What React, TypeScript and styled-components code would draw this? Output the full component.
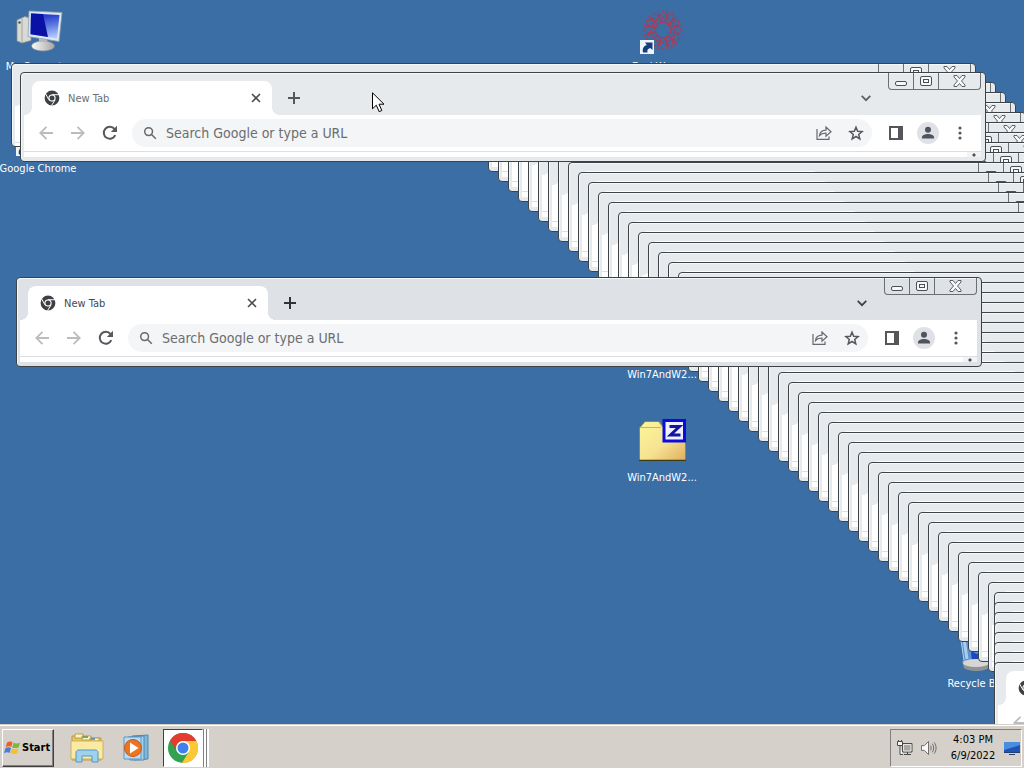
import React from "react";
import styled, { createGlobalStyle } from "styled-components";

const Global = createGlobalStyle`
  * { box-sizing: border-box; }
  body { margin: 0; background: #3a6ea5; font-family: "DejaVu Sans Condensed", "DejaVu Sans", sans-serif; }
  button { font: inherit; color: inherit; padding: 0; border: 0; background: none; }
`;

const Screen = styled.div`
  height: 100vh;
  display: flex;
  flex-direction: column;
  overflow: hidden;
`;

const Desktop = styled.main`
  position: relative;
  flex: 1;
  min-height: 0;
  overflow: hidden;
`;

const Shortcut = styled.a<{ $x: number; $y: number }>`
  position: absolute;
  left: ${(p) => p.$x}px;
  top: ${(p) => p.$y}px;
  width: 76px;
  display: flex;
  flex-direction: column;
  align-items: center;
  gap: 5px;
  color: #fff;
  font-size: 11px;
  line-height: 14px;
  white-space: nowrap;
  text-decoration: none;
`;

const Frame = styled.section<{ $x: number; $y: number; $w: number; $h: number; $active: boolean }>`
  position: absolute;
  left: ${(p) => p.$x}px;
  top: ${(p) => p.$y}px;
  width: ${(p) => p.$w}px;
  height: ${(p) => p.$h}px;
  display: flex;
  flex-direction: column;
  border: 1px solid #3c4246;
  border-radius: 4px;
  overflow: hidden;
  background: ${(p) => (p.$active ? "#dee1e6" : "#e7eaed")};
  box-shadow: inset 1px 1px 0 #f4f8fa;
  padding: 0 4px 4px 3px;
`;

const TabStrip = styled.header`
  display: flex;
  align-items: flex-start;
  height: 42px;
  flex: none;
  padding-left: 8px;
`;

const Tab = styled.div<{ $active: boolean }>`
  position: relative;
  display: flex;
  align-items: center;
  width: 240px;
  height: 34px;
  margin-top: 8px;
  padding: 0 8px 0 12px;
  gap: 8px;
  border-radius: 8px 8px 0 0;
  background: #fff;
  color: ${(p) => (p.$active ? "#45494d" : "#6b6f73")};
  font-size: 11px;
  flex: none;

  &::before,
  &::after {
    content: "";
    position: absolute;
    bottom: 0;
    width: 8px;
    height: 8px;
  }
  &::before {
    right: 100%;
    background: radial-gradient(circle at 0 0, transparent 8px, #fff 8px);
  }
  &::after {
    left: 100%;
    background: radial-gradient(circle at 100% 0, transparent 8px, #fff 8px);
  }
`;

const TabTitle = styled.span`
  flex: 1;
  white-space: nowrap;
`;

const IconButton = styled.button<{ $w?: number; $h?: number }>`
  display: flex;
  align-items: center;
  justify-content: center;
  flex: none;
  width: ${(p) => p.$w ?? 32}px;
  height: ${(p) => p.$h ?? 28}px;
`;

const NewTab = styled(IconButton)`
  margin: 11px 0 0 6px;
`;

const Spacer = styled.div`
  flex: 1;
`;

const Chevron = styled(IconButton)`
  margin: 11px 6px 0 0;
`;

const Caption = styled.div`
  display: flex;
  height: 17px;
  flex: none;
  border: 1px solid #6a6f73;
  border-top: 0;
  border-radius: 0 0 4px 4px;
  color: #4b5054;
`;

const CaptionButton = styled.button<{ $w: number }>`
  width: ${(p) => p.$w}px;
  height: 16px;
  display: flex;
  align-items: center;
  justify-content: center;

  & + & {
    border-left: 1px solid #6a6f73;
  }
`;

const Toolbar = styled.div`
  display: flex;
  align-items: center;
  height: 37px;
  flex: none;
  background: #fff;
  border-bottom: 1px solid #dcdfe2;
  padding: 0 5px 0 6px;
  color: #5f6368;
`;

const Omnibox = styled.label`
  display: flex;
  align-items: center;
  flex: 1;
  min-width: 0;
  height: 28px;
  margin-left: 6px;
  padding: 0 0 0 11px;
  border-radius: 14px;
  background: #f3f5f6;
`;

const Address = styled.input`
  flex: 1;
  min-width: 0;
  margin-left: 9px;
  padding: 0;
  border: 0;
  outline: 0;
  background: none;
  font: inherit;
  font-size: 14px;
  color: #5f6368;

  &::placeholder {
    color: #6a6e72;
    opacity: 1;
  }
`;

const Actions = styled.div`
  display: flex;
  margin-left: 8px;
`;

const Page = styled.div`
  flex: 1;
  background: #fff;
  display: flex;
  justify-content: flex-end;
`;

const Grip = styled.div`
  width: 14px;
  background: #f1f3f4;
  display: flex;
  align-items: center;
  justify-content: center;
`;

const ChromeMono = () => (
  <svg width="16" height="16" viewBox="0 0 16 16">
    <circle cx="8" cy="8" r="5.3" fill="none" stroke="#3d4145" strokeWidth="4.2" />
    <path d="M8 4.7H15M4.9 9.8L1.6 3.8M11.1 9.8L7.5 15.6" stroke="#fff" strokeWidth="1" />
    <circle cx="8" cy="8" r="3.6" fill="#fff" />
    <circle cx="8" cy="8" r="2.5" fill="#3d4145" />
  </svg>
);

type WinProps = { x: number; y: number; w: number; h?: number; active?: boolean; bare?: boolean };

/* A bare window lies under others, so only its frame, tab shape and buttons show. */
const BrowserWindow = ({ x, y, w, h = 90, active = false, bare = false }: WinProps) => (
  <Frame $x={x} $y={y} $w={w} $h={h} $active={active} aria-hidden={bare || undefined}>
    <TabStrip>
      <Tab $active={active}>
        <ChromeMono />
        {!bare && <TabTitle>New Tab</TabTitle>}
        {!bare && (
          <IconButton $w={16} $h={16} aria-label="Close tab">
            <svg width="10" height="10" viewBox="0 0 10 10" stroke="#4b4f53" strokeWidth="1.6"><path d="M1 1l8 8M9 1L1 9" /></svg>
          </IconButton>
        )}
      </Tab>
      {!bare && (
        <NewTab aria-label="New tab">
          <svg width="12" height="12" viewBox="0 0 12 12" stroke={active ? "#303438" : "#55595d"} strokeWidth="2"><path d="M6 0v12M0 6h12" /></svg>
        </NewTab>
      )}
      <Spacer />
      {!bare && (
        <Chevron aria-label="Search tabs">
          <svg width="10" height="7" viewBox="0 0 10 7" fill="none" stroke={active ? "#3c4044" : "#5b5f63"} strokeWidth="1.7"><path d="M.7.9L5 5.2 9.3.9" /></svg>
        </Chevron>
      )}
      <Caption>
        <CaptionButton $w={24} aria-label="Minimize">
          <svg width="12" height="16" viewBox="0 0 12 16" fill="#f6f8f9" stroke="currentColor"><rect x=".5" y="8.5" width="11" height="4" rx="1.5" /></svg>
        </CaptionButton>
        <CaptionButton $w={25} aria-label="Maximize">
          <svg width="12" height="10" viewBox="0 0 12 10" fill="#f6f8f9" stroke="currentColor"><rect x=".5" y=".5" width="11" height="9" rx="1.5" /><rect x="3.5" y="3.5" width="5" height="3" /></svg>
        </CaptionButton>
        <CaptionButton $w={42} aria-label="Close">
          <svg width="13" height="12" viewBox="0 0 13 12"><path d="M1 .5h3l2.500 3 2.500-3h3v1.500L8.500 6l3.500 4v1.500H9l-2.500-3-2.500 3H1V10l3.500-4L1 2z" fill="#f6f8f9" stroke="currentColor" strokeWidth=".9" /></svg>
        </CaptionButton>
      </Caption>
    </TabStrip>
    <Toolbar>
      <IconButton aria-label="Back"><svg width="14" height="14" viewBox="0 0 14 14" fill="none" stroke="#babcbe" strokeWidth="1.8"><path d="M14 7H1.500M7.500.8L1.300 7l6.200 6.200" /></svg></IconButton>
      {!bare && (
        <>
          <IconButton aria-label="Forward"><svg width="14" height="14" viewBox="0 0 14 14" fill="none" stroke="#babcbe" strokeWidth="1.8"><path d="M0 7h12.500M6.500.8L12.700 7l-6.200 6.200" /></svg></IconButton>
          <IconButton aria-label="Reload"><svg width="16" height="16" viewBox="0 0 16 16"><path d="M13.300 10.200A6 6 0 1 1 12.500 4" fill="none" stroke="#55595d" strokeWidth="2" /><path d="M15 .8V7H8.800z" fill="#55595d" /></svg></IconButton>
          <Omnibox>
            <svg width="14" height="14" viewBox="0 0 14 14" fill="none" stroke="#66696d" strokeWidth="1.5"><circle cx="5.600" cy="5.600" r="3.900" /><path d="M8.500 8.500l4.300 4.300" /></svg>
            <Address aria-label="Address" placeholder="Search Google or type a URL" />
            <IconButton aria-label="Share"><svg width="16" height="14" viewBox="0 0 16 14" fill="none" stroke="#66696d" strokeWidth="1.2"><path d="M1 3v10.300h12V10.500M3.500 9.500C4 6 6.500 4.300 10 4.200V1l5 4.700-5 4.500V7.200C7 7 5 7.800 3.500 9.500z" /></svg></IconButton>
            <IconButton aria-label="Bookmark"><svg width="16" height="16" viewBox="0 0 16 16" fill="none" stroke="#55595d" strokeWidth="1.5"><path d="M8 2.200l1.700 4.100 4.400.3-3.400 2.900 1.100 4.300L8 11.500l-3.800 2.300 1.100-4.300-3.400-2.900 4.400-.3z" /></svg></IconButton>
          </Omnibox>
          <Actions>
            <IconButton aria-label="Side panel"><svg width="14" height="14" viewBox="0 0 14 14"><path fill="#55555a" fillRule="evenodd" d="M0 0h14v14H0zM2 2v10h7V2z" /></svg></IconButton>
            <IconButton aria-label="Profile"><svg width="22" height="22" viewBox="0 0 22 22"><circle cx="11" cy="11" r="11" fill="#dfe1e6" /><circle cx="11" cy="7.700" r="3" fill="#4f535b" /><path d="M5 16.500v-1.200c0-2 3-3.300 6-3.300s6 1.300 6 3.300v1.200z" fill="#4f535b" /></svg></IconButton>
            <IconButton aria-label="Menu"><svg width="4" height="14" viewBox="0 0 4 14" fill="#55595d"><circle cx="2" cy="2" r="1.600" /><circle cx="2" cy="7" r="1.600" /><circle cx="2" cy="12" r="1.600" /></svg></IconButton>
          </Actions>
        </>
      )}
    </Toolbar>
    <Page>
      <Grip><svg width="4" height="4" viewBox="0 0 4 4"><path d="M0 2l2-2 2 2-2 2z" fill="#555" /></svg></Grip>
    </Page>
  </Frame>
);

const ComputerIcon = () => (
  <svg width="48" height="48" viewBox="1 1 48 48">
    <defs>
      <linearGradient id="screenGlow" x1=".4" x2=".6" y1="0" y2="1"><stop offset="0" stopColor="#1c2cc8" /><stop offset=".5" stopColor="#5a78e0" /><stop offset="1" stopColor="#b4ccff" /></linearGradient>
      <linearGradient id="stand" x1="0" x2="1"><stop offset="0" stopColor="#fafafa" /><stop offset="1" stopColor="#a9a5a5" /></linearGradient>
    </defs>
    <path d="M3 14l8-3.500 6 2v22l-9 2.500-5-2z" fill="#d9dad4" stroke="#8d918c" strokeWidth=".8" />
    <path d="M8 13v23" stroke="#a2a49e" />
    <circle cx="5.500" cy="16.500" r="1.200" fill="#3b5c38" />
    <path d="M25 32h8l1 7h-9z" fill="#c3c1c0" />
    <ellipse cx="29" cy="40" rx="11.500" ry="5" fill="url(#stand)" stroke="#8f8f94" strokeWidth=".6" />
    <path d="M15 5l33 1.500-3 29L14 30.500z" fill="#dfe7ee" stroke="#8ba0b5" strokeWidth=".8" />
    <path d="M17 7.500l28.500 1.500-2.500 23.500-26.500-4.300z" fill="url(#screenGlow)" />
    <path d="M17 7.500l12 .6 5 23-17.500-2.900z" fill="#0a12a6" />
  </svg>
);

const FolderIcon = () => (
  <svg width="48" height="48" viewBox="-1 -1 48 48">
    <defs><linearGradient id="folder" x1="0" x2="1" y1="0" y2="1"><stop offset="0" stopColor="#fdf79a" /><stop offset=".55" stopColor="#f5e291" /><stop offset="1" stopColor="#dfae5c" /></linearGradient></defs>
    <path d="M.5 9L6 2.500h14l4 5.500h22.500v34H.5z" fill="url(#folder)" stroke="#8f8a3c" />
    <path d="M2 8.500h20M20 3.500l3.500 4.500" fill="none" stroke="#c2b860" />
    <path d="M0 41.500h47" stroke="#3d3b16" strokeWidth="1.500" />
    <rect x="25" y="1.500" width="20.500" height="20.500" fill="#eef0ff" stroke="#0b0bdc" strokeWidth="3" />
    <path d="M30.500 7.500h10L31.500 16H41.500" fill="none" stroke="#1414a0" strokeWidth="3" />
  </svg>
);

const ArrowOverlay = () => (
  <>
    <rect x="2" y="33" width="14" height="14" fill="#eef4f8" />
    <path d="M5 45.500c-.8-4 .6-6.500 3.800-7.500L7 35.500h7.500V43l-2.300-2c-2.400.8-3.200 2-2.700 4.500z" fill="#123f7c" />
  </>
);

const RedIcon = () => (
  <svg width="48" height="48" viewBox="0 0 48 48" fill="none">
    {Array.from({ length: 12 }, (_, i) => (
      <path key={i} transform={`rotate(${i * 30} 25 23)`} d="M25 16l-4-5 4-8 4 8zM22 13l-3-9M28 13l3-9M23 16l2-7 2 7" stroke="#b5364e" strokeWidth="1" strokeDasharray="3 1" opacity=".85" />
    ))}
    <ArrowOverlay />
  </svg>
);

const ChromeDisc = () => (
  <>
    <circle cx="15" cy="15" r="15" fill="#31a350" />
    <path d="M15 8h13.300A15 15 0 0 1 14 30l7-11.500z" fill="#fcc934" />
    <path d="M2 7.500A15 15 0 0 1 28.300 8H15a7 7 0 0 0-6.500 9.500z" fill="#e33b2e" />
    <circle cx="15" cy="15" r="7" fill="#fff" />
    <circle cx="15" cy="15" r="5.500" fill="#4080ed" />
  </>
);

const ChromeShortcutIcon = () => (
  <svg width="44" height="48" viewBox="0 0 44 48">
    <g transform="translate(0 2) scale(1.450)"><ChromeDisc /></g>
    <g transform="translate(-2 0)"><ArrowOverlay /></g>
  </svg>
);

const BinIcon = () => (
  <svg width="48" height="48" viewBox="0 0 48 48">
    <path d="M7 3h34l-5 40H13z" fill="#5c93cc" stroke="#b5d2ea" />
    <path d="M12 15l3 20" stroke="#a9cdf0" strokeWidth="3" />
    <path d="M19 27l6 3 7-3 4 8-4 4H20z" fill="#1c46c8" />
    <path d="M10 37h28l-2 7c-3 4-20 4-24 0z" fill="#8f9296" />
    <ellipse cx="24" cy="39" rx="13" ry="4" fill="#d8d6d4" />
  </svg>
);

const StartFlag = () => (
  <svg width="17" height="16" viewBox="0 0 17 16">
    <path d="M3 2.500c2-1.300 4-1.300 5.500-.3L7.300 7C5.700 6 3.800 6 1.700 7.200z" fill="#e8622c" />
    <path d="M9.500 2.700c2 1 4.300 1 6.500-.2L14.700 7.200c-2.200 1.100-4.300 1.100-6.400.2z" fill="#7cb83a" />
    <path d="M1.400 8.300c2-1.200 4-1.200 5.600-.2l-1.300 4.800C4.200 12 2.200 12 0 13.200z" fill="#4a7fd0" />
    <path d="M8 8.500c2 1 4.200 1 6.400-.1l-1.300 4.800c-2.200 1.100-4.400 1.100-6.400.1z" fill="#f6bf2d" />
  </svg>
);

const ExplorerIcon = () => (
  <svg width="34" height="32" viewBox="0 0 34 32">
    <path d="M2 4h9l1 2h19v22H2z" fill="#e6c766" stroke="#b89a48" />
    <path d="M5 2h8v4H5zM12 4h9v4h-9zM20 6h9v3h-9z" fill="#fff3c0" stroke="#a9933f" strokeWidth=".8" />
    <path d="M13 5h5" stroke="#3c9a62" strokeWidth="1.500" />
    <path d="M21 7h4" stroke="#3a84c8" strokeWidth="1.500" />
    <path d="M1 9h32v18H1z" fill="#faeaa2" stroke="#cdb15c" />
    <path d="M6 30V21c0-2 1-3 3-3h16c2 0 3 1 3 3v9h-6v-6H12v6z" fill="#9fd0ee" stroke="#5297c4" />
  </svg>
);

const PlayerIcon = () => (
  <svg width="28" height="28" viewBox="0 0 28 28">
    <path d="M9 2l16-1v24l-14 1z" fill="#7fb6dc" stroke="#4d88b4" />
    <path d="M5 3l16-1v24l-14 0z" fill="#a5d2ee" stroke="#4d88b4" />
    <path d="M1 3h17v22H1z" fill="#b9dcf2" stroke="#5a98c4" />
    <circle cx="10" cy="14" r="8.500" fill="#ee7421" stroke="#c95a12" />
    <path d="M7 8.500l8.500 5.500L7 19.500z" fill="#fff" />
  </svg>
);

const NetworkIcon = () => (
  <svg width="16" height="16" viewBox="0 0 16 16" fill="none" stroke="#4a4a4a">
    <path d="M5.500 3.500h9.500v8.500H5.500z" fill="#a9a7a2" />
    <path d="M6.500 4.500h7.500v6.500H6.500z" stroke="#e8e6e2" />
    <path d="M7 14.500h7M10.500 12v2" />
    <path d="M.5 1.500h5v4h-5zM3 5.500v9h3M1.500 0v2M4.500 0v2" fill="#f5f5f5" />
  </svg>
);

const SpeakerIcon = () => (
  <svg width="17" height="16" viewBox="0 0 17 16" fill="none" stroke="#666">
    <path d="M.5 5.500h3L8 1v14l-4.500-4.500h-3z" fill="#f8f8f8" />
    <path d="M10 5.500c1 1.500 1 3.500 0 5M12 3.500c2 2.700 2 6.300 0 9M14 2c2.700 3.700 2.700 8.300 0 12" />
  </svg>
);

const DesktopIcon = () => (
  <svg width="16" height="14" viewBox="0 0 16 14">
    <path d="M0 1h16v10H0z" fill="#1d55b5" />
    <path d="M0 1h16v3L0 9z" fill="#4a8de0" />
    <path d="M0 11.500h16M5 13.500h6" stroke="#24406f" />
  </svg>
);

const Cursor = styled.svg`
  position: absolute;
  left: 372px;
  top: 92px;
`;

const Taskbar = styled.footer`
  display: flex;
  align-items: center;
  height: 44px;
  flex: none;
  background: #d5d0c9;
  border-top: 1px solid #d5d0c9;
  box-shadow: inset 0 1px 0 #fff;
  padding: 3px 2px 1px;
`;

const Start = styled.button`
  && {
    display: flex;
    align-items: center;
    gap: 1px;
    width: 52px;
    height: 38px;
    padding-left: 1px;
    border: 1px solid;
    border-color: #fff #404040 #404040 #fff;
    box-shadow: inset -1px -1px 0 #808080;
    font-size: 11px;
    font-weight: bold;
    color: #000;
  }
`;

const Pinned = styled.nav`
  display: flex;
  align-items: center;
  flex: 1;
  padding-left: 8px;
`;

const Launcher = styled(IconButton)`
  width: 50px;
  height: 38px;
`;

const Running = styled.button`
  && {
    display: flex;
    align-items: center;
    justify-content: center;
    width: 40px;
    height: 38px;
    margin-left: 1px;
    background: #fff;
    border: 1px solid;
    border-color: #404040 #fff #fff #404040;
    box-shadow: 1px 0 0 #808080, 3px 0 0 #fff, 4px 0 0 #808080, 6px 0 0 #fff;
  }
`;

const Tray = styled.div`
  display: flex;
  align-items: center;
  height: 38px;
  border: 1px solid;
  border-color: #808080 #fff #fff #808080;
  padding: 0 1px 0 6px;
`;

const TrayButton = styled(IconButton)`
  width: 16px;
  height: 20px;

  & + & {
    margin-left: 8px;
  }
`;

const Clock = styled.time`
  width: 62px;
  margin-left: 5px;
  font-size: 11px;
  line-height: 16px;
  text-align: center;
  color: #000;
`;

const cascade = Array.from({ length: 59 }, (_, i) => ({ x: Math.min(488 + i * 10, 994), y: 82 + i * 10 }));

export default function App() {
  return (
    <Screen>
      <Global />
      <Desktop>
        <Shortcut href="#" $x={1} $y={7}><ComputerIcon />My Computer</Shortcut>
        <Shortcut href="#" $x={0} $y={109}><ChromeShortcutIcon />Google Chrome</Shortcut>
        <Shortcut href="#" $x={624} $y={7}><RedIcon />DarkWave...</Shortcut>
        <Shortcut href="#" $x={624} $y={315}><FolderIcon />Win7AndW2...</Shortcut>
        <Shortcut href="#" $x={624} $y={418}><FolderIcon />Win7AndW2...</Shortcut>
        <Shortcut href="#" $x={938} $y={624}><BinIcon />Recycle Bin</Shortcut>
        {cascade.map((c) => <BrowserWindow key={c.y} x={c.x} y={c.y} w={508} bare />)}
        <BrowserWindow x={11} y={63} w={965} h={84} bare />
        <BrowserWindow x={20} y={72} w={966} />
        <BrowserWindow x={16} y={277} w={966} active />
        <Cursor width="13" height="21" viewBox="0 0 13 21"><path d="M.5.8v16l3.800-3.600 2.900 6.500 2.600-1.200L7 12.200h5z" fill="#fff" stroke="#000" /></Cursor>
      </Desktop>
      <Taskbar>
        <Start><StartFlag />Start</Start>
        <Pinned>
          <Launcher aria-label="Windows Explorer"><ExplorerIcon /></Launcher>
          <Launcher aria-label="Media Player"><PlayerIcon /></Launcher>
          <Running aria-label="Google Chrome"><svg width="30" height="30" viewBox="0 0 30 30"><ChromeDisc /></svg></Running>
        </Pinned>
        <Tray>
          <TrayButton aria-label="Network"><NetworkIcon /></TrayButton>
          <TrayButton aria-label="Volume"><SpeakerIcon /></TrayButton>
          <Clock>4:03 PM<br />6/9/2022</Clock>
          <TrayButton aria-label="Show desktop"><DesktopIcon /></TrayButton>
        </Tray>
      </Taskbar>
    </Screen>
  );
}
